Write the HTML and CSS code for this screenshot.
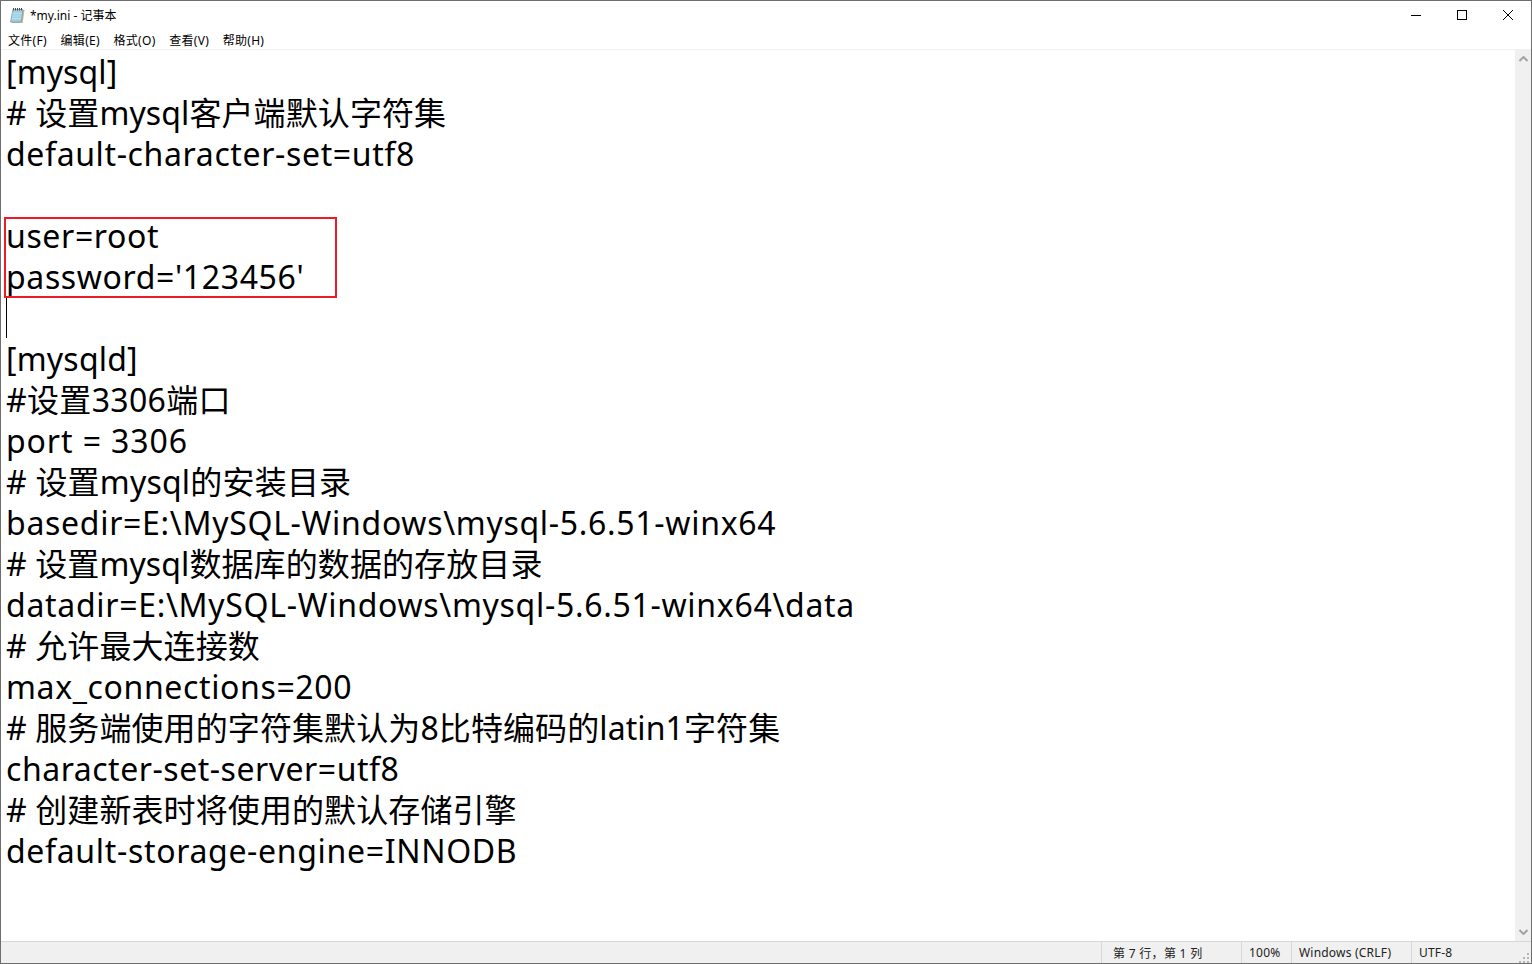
FILE: index.html
```html
<!DOCTYPE html>
<html lang="zh-CN">
<head>
<meta charset="utf-8">
<title>*my.ini - 记事本</title>
<link rel="stylesheet" href="styles.css">
</head>
<body>
<div class="window">
  <header class="titlebar">
    <svg class="app-icon" width="16" height="17" viewBox="0 0 16 17"><path d="M5 3h10.5l-1.8 13H2.5z" fill="#c9b78e"/><path d="M4 2.5h10l-1.8 12.5H1.5z" fill="#9fd0e4" stroke="#7a9aa8" stroke-width=".8"/><path d="M3.6 6.5h9.4M3.2 9h9.4M2.8 11.5h9.4" stroke="#c4e3ef" stroke-width=".8"/><path d="M4.5 1v2.5M6.5 1v2.5M8.5 1v2.5M10.5 1v2.5M12.5 1v2.5" stroke="#4a4a4a" stroke-width="1"/></svg>
    <span class="title">*my.ini - 记事本</span>
    <div class="controls">
      <button class="ctl"><svg width="10" height="10" viewBox="0 0 10 10"><path d="M0 5.5h10" stroke="#000"/></svg></button>
      <button class="ctl"><svg width="10" height="10" viewBox="0 0 10 10"><rect x=".5" y=".5" width="9" height="9" fill="none" stroke="#000"/></svg></button>
      <button class="ctl"><svg width="10" height="10" viewBox="0 0 10 10"><path d="M0 0l10 10M10 0L0 10" stroke="#000"/></svg></button>
    </div>
  </header>
  <nav class="menubar">
    <span>文件(F)</span><span>编辑(E)</span><span>格式(O)</span><span>查看(V)</span><span>帮助(H)</span>
  </nav>
  <main class="body">
    <div class="editor">
      <div class="line ls-1">[mysql]</div>
      <div class="line ls-1"># 设置mysql客户端默认字符集</div>
      <div class="line ls-6">default-character-set=utf8</div>
      <div class="line">&nbsp;</div>
      <div class="line ls-6">user=root</div>
      <div class="line ls-6">password='123456'</div>
      <div class="line">&nbsp;</div>
      <div class="line ls-2">[mysqld]</div>
      <div class="line ls-3">#设置3306端口</div>
      <div class="line ls-9">port = 3306</div>
      <div class="line ls-2"># 设置mysql的安装目录</div>
      <div class="line ls-7">basedir=E:\MySQL-Windows\mysql-5.6.51-winx64</div>
      <div class="line ls-1"># 设置mysql数据库的数据的存放目录</div>
      <div class="line ls-7">datadir=E:\MySQL-Windows\mysql-5.6.51-winx64\data</div>
      <div class="line ls-1"># 允许最大连接数</div>
      <div class="line ls-6">max_connections=200</div>
      <div class="line ls-1"># 服务端使用的字符集默认为8比特编码的latin1字符集</div>
      <div class="line ls-5">character-set-server=utf8</div>
      <div class="line ls-1"># 创建新表时将使用的默认存储引擎</div>
      <div class="line ls-6b">default-storage-engine=INNODB</div>
      <div class="redbox"></div>
      <div class="caret"></div>
    </div>
    <aside class="scrollbar">
      <svg width="9" height="6" viewBox="0 0 9 6"><path d="M.5 5l4-4 4 4" fill="none" stroke="#a3a3a3" stroke-width="2"/></svg>
      <svg width="9" height="6" viewBox="0 0 9 6"><path d="M.5 1l4 4 4-4" fill="none" stroke="#a3a3a3" stroke-width="2"/></svg>
    </aside>
  </main>
  <footer class="statusbar">
    <span class="cell pos">第 7 行，第 1 列</span>
    <span class="cell zoom">100%</span>
    <span class="cell eol">Windows (CRLF)</span>
    <span class="cell enc">UTF-8</span>
    <svg class="grip" width="12" height="12" viewBox="0 0 12 12"><path d="M9 2h2v2H9zM5 6h2v2H5zM9 6h2v2H9zM1 10h2v2H1zM5 10h2v2H5zM9 10h2v2H9z" fill="#b5b5b5"/></svg>
  </footer>
</div>
</body>
</html>
```
FILE: styles.css
```css
* { box-sizing: border-box; }
html, body { margin: 0; height: 100%; }
body { font-family: "Noto Sans", "Noto Sans CJK SC", sans-serif; background: #fff; color: #000; overflow: hidden; }
.window { width: 1532px; height: 964px; display: flex; flex-direction: column; border: 1px solid #6e6e6e; background: #fff; }
.titlebar { height: 29px; display: flex; align-items: center; padding-left: 8px; flex: none; }
.app-icon { flex: none; margin-top: -1px; }
.title { font-size: 12px; margin-left: 5px; margin-top: -2px; color: #000; }
.controls { margin-left: auto; display: flex; margin-top: -1px; }
.ctl { width: 46px; height: 29px; border: 0; background: none; padding: 0; display: flex; align-items: center; justify-content: center; }
.menubar { height: 20px; display: flex; align-items: center; flex: none; padding-left: 7px; gap: 13.6px; font-size: 12px; letter-spacing: .3px; border-bottom: 1px solid #f0f0f0; }
.body { flex: 1; display: flex; min-height: 0; }
.editor { flex: 1; position: relative; padding: 1px 0 0 5px; font-size: 32px; overflow: hidden; }
.line { height: 41px; line-height: 41px; white-space: pre; }
.ls-1 { letter-spacing: .1px; }
.ls-2 { letter-spacing: .2px; }
.ls-3 { letter-spacing: .33px; }
.ls-5 { letter-spacing: .52px; }
.ls-6 { letter-spacing: .63px; }
.ls-6b { letter-spacing: .67px; }
.ls-7 { letter-spacing: .7px; }
.ls-9 { letter-spacing: .9px; }
.redbox { position: absolute; left: 3px; top: 167px; width: 333px; height: 81px; border: 2px solid #ed1c24; }
.caret { position: absolute; left: 5px; top: 248px; width: 1px; height: 40px; background: #000; }
.scrollbar { width: 16px; background: #f0f0f0; display: flex; flex-direction: column; justify-content: space-between; align-items: center; padding: 6px 0; flex: none; }
.statusbar { height: 22px; flex: none; background: #f0f0f0; border-top: 1px solid #d7d7d7; display: flex; align-items: center; justify-content: flex-end; font-size: 12px; letter-spacing: .2px; color: #222; position: relative; }
.cell { height: 100%; display: flex; align-items: center; border-left: 1px solid #d7d7d7; padding-left: 7px; }
.pos { width: 140px; padding-left: 11px; letter-spacing: .3px; }
.zoom { width: 50px; }
.eol { width: 120px; }
.enc { width: 120px; }
.grip { position: absolute; right: 1px; bottom: 0; }
```
